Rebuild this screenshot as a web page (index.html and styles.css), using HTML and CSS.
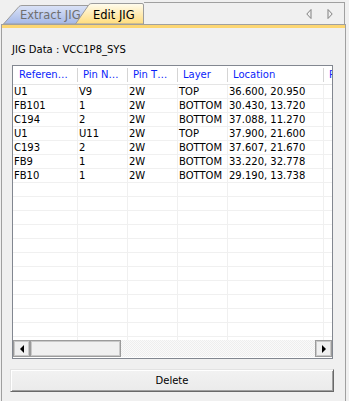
FILE: index.html
```html
<!DOCTYPE html>
<html>
<head>
<meta charset="utf-8">
<link rel="stylesheet" href="styles.css">
</head>
<body>
<div class="window">
  <div class="tabbar">
    <div class="tab tab-extract">
      <svg class="tab-shape" width="89" height="19" viewBox="0 0 89 19">
        <defs><linearGradient id="gb" x1="0" y1="0" x2="0" y2="1"><stop offset="0" stop-color="#dbe3f7"/><stop offset="1" stop-color="#a5b8e7"/></linearGradient></defs>
        <path d="M0.5 19 L16 1.5 Q17 0.5 19 0.5 L88.5 0.5 L88.5 19 Z" fill="url(#gb)" stroke="#9c9c9c"/>
      </svg>
      <span class="tab-label">Extract JIG</span>
    </div>
    <div class="tab tab-edit">
      <svg class="tab-shape" width="70" height="21" viewBox="0 0 70 21">
        <defs><linearGradient id="gy" x1="0" y1="0" x2="0" y2="1"><stop offset="0" stop-color="#fffcef"/><stop offset="1" stop-color="#ffdc7c"/></linearGradient></defs>
        <path d="M0.5 21 L14 1.5 Q15 0.5 17 0.5 L67 0.5 Q68.5 0.5 68.5 2 L68.5 21 Z" fill="url(#gy)" stroke="#9c9c9c"/>
      </svg>
      <span class="tab-label">Edit JIG</span>
    </div>
    <div class="tabrest">
      <svg width="6" height="10" viewBox="0 0 6 10"><path d="M5 0.5 L5 9.5 L0.8 5 Z" fill="none" stroke="#808080"/></svg>
      <svg width="6" height="10" viewBox="0 0 6 10"><path d="M1 0.5 L1 9.5 L5.2 5 Z" fill="none" stroke="#808080"/></svg>
    </div>
  </div>
  <div class="panel">
    <div class="jig">JIG Data : VCC1P8_SYS</div>
    <div class="list">
      <div class="row head">
        <div class="hc c1">Referen…</div>
        <div class="hc">Pin N…</div>
        <div class="hc">Pin T…</div>
        <div class="hc">Layer</div>
        <div class="hc">Location</div>
        <div class="hc last">R</div>
      </div>
      <div class="body">
        <div class="row"><div>U1</div><div>V9</div><div>2W</div><div>TOP</div><div>36.600, 20.950</div><div></div></div>
        <div class="row"><div>FB101</div><div>1</div><div>2W</div><div>BOTTOM</div><div>30.430, 13.720</div><div></div></div>
        <div class="row"><div>C194</div><div>2</div><div>2W</div><div>BOTTOM</div><div>37.088, 11.270</div><div></div></div>
        <div class="row"><div>U1</div><div>U11</div><div>2W</div><div>TOP</div><div>37.900, 21.600</div><div></div></div>
        <div class="row"><div>C193</div><div>2</div><div>2W</div><div>BOTTOM</div><div>37.607, 21.670</div><div></div></div>
        <div class="row"><div>FB9</div><div>1</div><div>2W</div><div>BOTTOM</div><div>33.220, 32.778</div><div></div></div>
        <div class="row"><div>FB10</div><div>1</div><div>2W</div><div>BOTTOM</div><div>29.190, 13.738</div><div></div></div>
        <div class="row"><div></div><div></div><div></div><div></div><div></div><div></div></div>
        <div class="row"><div></div><div></div><div></div><div></div><div></div><div></div></div>
        <div class="row"><div></div><div></div><div></div><div></div><div></div><div></div></div>
        <div class="row"><div></div><div></div><div></div><div></div><div></div><div></div></div>
        <div class="row"><div></div><div></div><div></div><div></div><div></div><div></div></div>
        <div class="row"><div></div><div></div><div></div><div></div><div></div><div></div></div>
        <div class="row"><div></div><div></div><div></div><div></div><div></div><div></div></div>
        <div class="row"><div></div><div></div><div></div><div></div><div></div><div></div></div>
        <div class="row"><div></div><div></div><div></div><div></div><div></div><div></div></div>
        <div class="row"><div></div><div></div><div></div><div></div><div></div><div></div></div>
        <div class="row"><div></div><div></div><div></div><div></div><div></div><div></div></div>
        <div class="row"><div></div><div></div><div></div><div></div><div></div><div></div></div>
      </div>
      <div class="hscroll">
        <div class="sbtn"><span class="tri-left"></span></div>
        <div class="thumb"></div>
        <div class="track"></div>
        <div class="sbtn"><span class="tri-right"></span></div>
      </div>
    </div>
    <button class="delete">Delete</button>
  </div>
</div>
</body>
</html>
```

FILE: styles.css
```css
html, body {
  margin: 0;
  padding: 0;
  background: #f0f0f0;
}
body {
  font-family: "DejaVu Sans", Verdana, sans-serif;
  font-size: 10px;
  color: #000;
}
.window {
  width: 349px;
  height: 401px;
  overflow: hidden;
}
.tabbar {
  display: flex;
  align-items: flex-end;
  height: 24px;
}
.tab {
  position: relative;
  box-sizing: border-box;
}
.tab-shape {
  position: absolute;
  left: 0;
  top: 0;
}
.tab-label {
  position: relative;
  display: block;
  font-size: 11.5px;
  line-height: 14px;
  white-space: nowrap;
}
.tab-extract {
  margin-left: 3px;
  width: 89px;
  height: 19px;
  padding: 3px 0 0 17px;
  color: #6f6f6f;
}
.tab-edit {
  margin-left: -17px;
  width: 70px;
  height: 21px;
  padding: 5px 0 0 18px;
  color: #000;
}
.tabrest {
  box-sizing: border-box;
  width: 201px;
  height: 22px;
  margin-left: -1px;
  border-top: 1px solid #a0a0a0;
  border-right: 1px solid #a0a0a0;
  display: flex;
  align-items: center;
  justify-content: flex-end;
  gap: 15px;
  padding: 0 11px 0 0;
}
.panel {
  box-sizing: border-box;
  width: 345px;
  margin-left: 1px;
  height: 377px;
  border-left: 1px solid #a0a0a0;
  border-right: 1px solid #a0a0a0;
  border-top: 1px solid #a0a0a0;
  box-shadow: inset 0 3px 0 #fcd672;
  padding: 3px 0 0 0;
  display: flex;
  flex-direction: column;
}
.jig {
  margin: 16px 0 0 10px;
  line-height: 12px;
  height: 12px;
}
.list {
  box-sizing: border-box;
  margin: 9px 0 0 10px;
  width: 321px;
  height: 294px;
  border: 1px solid #828790;
  background: #fff;
  display: flex;
  flex-direction: column;
}
.row {
  display: grid;
  grid-template-columns: 65px 50px 50px 50px 96px 1fr;
  height: 14px;
  box-sizing: border-box;
  border-bottom: 1px solid #f0f0f0;
}
.row > div {
  box-sizing: border-box;
  border-right: 1px solid #f0f0f0;
  padding-left: 1px;
  line-height: 13px;
  white-space: nowrap;
  overflow: hidden;
}
.row > div:last-child {
  border-right: none;
}
.row.head {
  height: 19px;
  border-bottom: 1px solid #e5e5e5;
}
.row.head > .hc {
  border-right: none;
  color: #0a1efa;
  padding-left: 5px;
  line-height: 18px;
  background: linear-gradient(#d5d5d5, #d5d5d5) right 2px / 1px 14px no-repeat;
}
.row.head > .hc.c1 {
  padding-left: 6px;
}
.row.head > .hc.last {
  background: none;
}
.body {
  height: 255px;
  overflow: hidden;
}
.hscroll {
  display: flex;
  height: 17px;
  margin-bottom: 1px;
}
.sbtn {
  box-sizing: border-box;
  width: 17px;
  height: 17px;
  background: #f0f0f0;
  border: 1px solid #9b9b9b;
  box-shadow: inset 0 0 0 1px #c9c9c9;
  display: flex;
  align-items: center;
  justify-content: center;
}
.tri-left {
  width: 0;
  height: 0;
  border-top: 4px solid transparent;
  border-bottom: 4px solid transparent;
  border-right: 4px solid #000;
}
.tri-right {
  width: 0;
  height: 0;
  border-top: 4px solid transparent;
  border-bottom: 4px solid transparent;
  border-left: 4px solid #000;
}
.thumb {
  box-sizing: border-box;
  width: 91px;
  height: 17px;
  background: #f0f0f0;
  border: 1px solid #9b9b9b;
  box-shadow: inset 0 0 0 1px #c9c9c9;
}
.track {
  flex: 1;
  background: repeating-conic-gradient(#eeeeee 0 25%, #fafafa 0 50%) 0 0 / 2px 2px;
}
.delete {
  box-sizing: border-box;
  margin: 10px 0 0 8px;
  width: 324px;
  height: 23px;
  font-family: "DejaVu Sans", Verdana, sans-serif;
  font-size: 10px;
  color: #000;
  background: linear-gradient(#f2f2f2, #ebebeb);
  border: 1px solid;
  border-color: #e3e3e3 #696969 #696969 #e3e3e3;
  box-shadow: inset 1px 1px 0 #fff, inset -1px -1px 0 #a0a0a0;
  padding: 0;
}
```
